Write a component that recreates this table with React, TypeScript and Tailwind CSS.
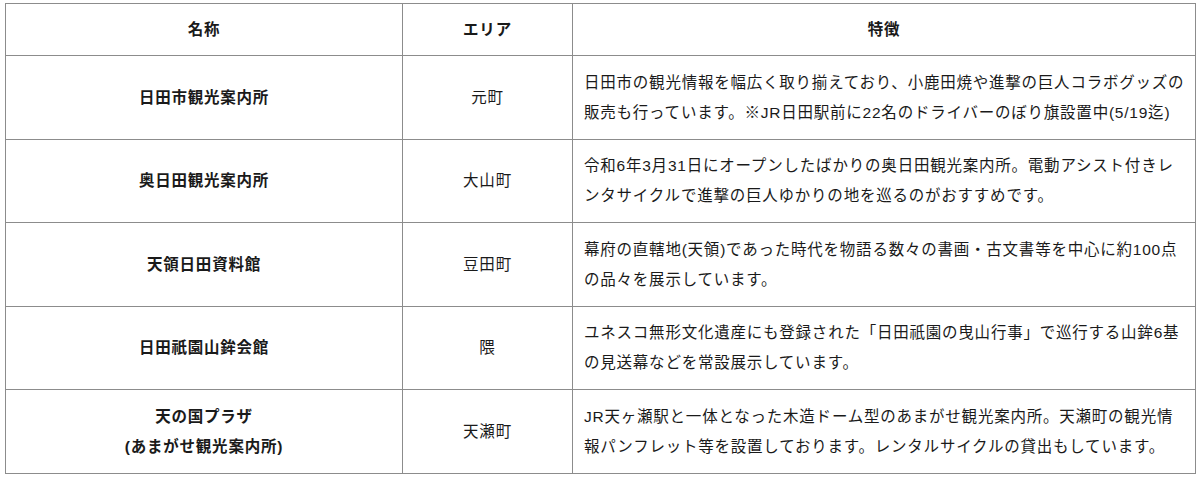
const rows = [
  {
    name: ["日田市観光案内所"],
    area: "元町",
    lines: [
      "日田市の観光情報を幅広く取り揃えており、小鹿田焼や進撃の巨人コラボグッズの",
      "販売も行っています。※JR日田駅前に22名のドライバーのぼり旗設置中(5/19迄)",
    ],
    h: "h-[84px]",
  },
  {
    name: ["奥日田観光案内所"],
    area: "大山町",
    lines: [
      "令和6年3月31日にオープンしたばかりの奥日田観光案内所。電動アシスト付きレ",
      "ンタサイクルで進撃の巨人ゆかりの地を巡るのがおすすめです。",
    ],
    h: "h-[83px]",
  },
  {
    name: ["天領日田資料館"],
    area: "豆田町",
    lines: [
      "幕府の直轄地(天領)であった時代を物語る数々の書画・古文書等を中心に約100点",
      "の品々を展示しています。",
    ],
    h: "h-[84px]",
  },
  {
    name: ["日田祇園山鉾会館"],
    area: "隈",
    lines: [
      "ユネスコ無形文化遺産にも登録された「日田祇園の曳山行事」で巡行する山鉾6基",
      "の見送幕などを常設展示しています。",
    ],
    h: "h-[83px]",
  },
  {
    name: ["天の国プラザ", "(あまがせ観光案内所)"],
    area: "天瀬町",
    lines: [
      "JR天ヶ瀬駅と一体となった木造ドーム型のあまがせ観光案内所。天瀬町の観光情",
      "報パンフレット等を設置しております。レンタルサイクルの貸出もしています。",
    ],
    h: "h-[84px]",
  },
];

export default function App() {
  return (
    <div className="w-[1200px] h-[480px] bg-white pt-[3px] pl-[5px] font-['Liberation_Sans','Noto_Sans_CJK_JP',sans-serif] text-[15.5px] leading-[30px] tracking-[0.05em] text-[#1a1a1a]">
      <table className="w-[1190px] table-fixed border-collapse border border-[#8c8c8c]">
        <colgroup>
          <col className="w-[397px]" />
          <col className="w-[170px]" />
          <col className="w-[623px]" />
        </colgroup>
        <thead>
          <tr className="h-[52px]">
            <th className="border border-[#8c8c8c] text-center font-bold">名称</th>
            <th className="border border-[#8c8c8c] text-center font-bold">エリア</th>
            <th className="border border-[#8c8c8c] text-center font-bold">特徴</th>
          </tr>
        </thead>
        <tbody>
          {rows.map((r) => (
            <tr key={r.area} className={r.h}>
              <td className="border border-[#8c8c8c] text-center align-middle font-bold">
                {r.name.map((n) => (
                  <div key={n}>{n}</div>
                ))}
              </td>
              <td className="border border-[#8c8c8c] text-center align-middle">{r.area}</td>
              <td className="border border-[#8c8c8c] pl-[11px] align-middle whitespace-nowrap">
                {r.lines.map((l) => (
                  <div key={l}>{l}</div>
                ))}
              </td>
            </tr>
          ))}
        </tbody>
      </table>
    </div>
  );
}
